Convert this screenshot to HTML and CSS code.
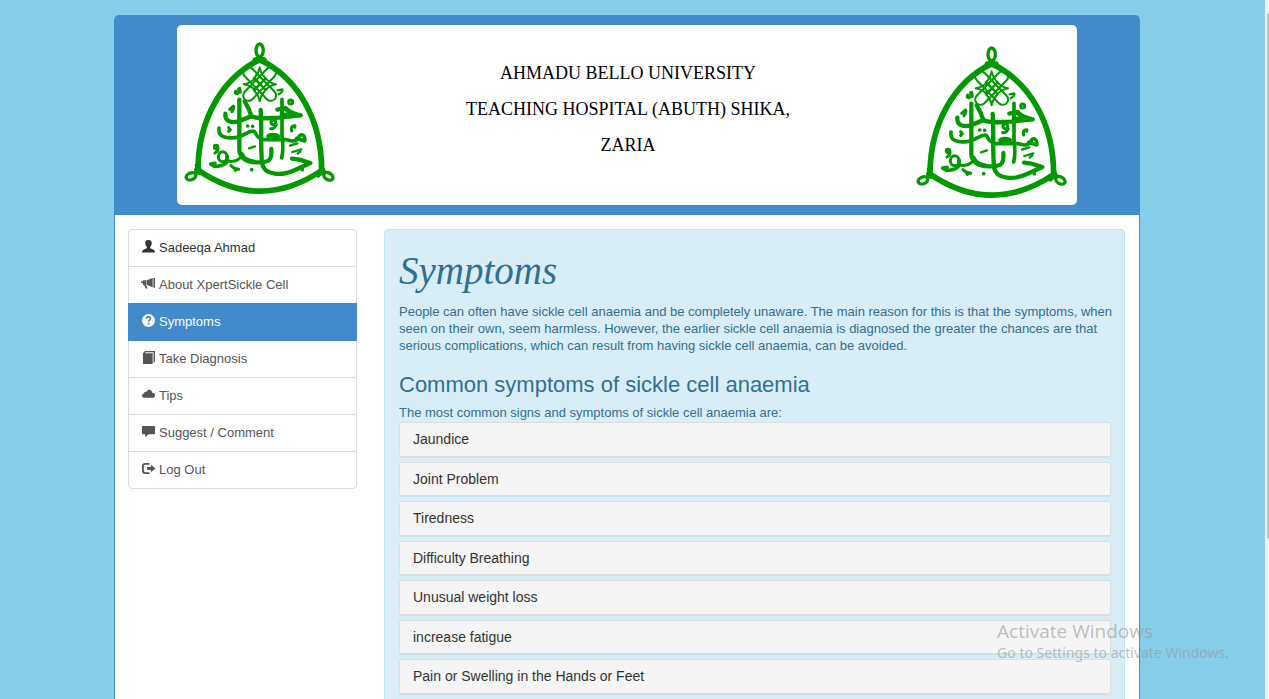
FILE: index.html
```
<!DOCTYPE html>
<html lang="en">
<head>
<meta charset="utf-8">
<title>XpertSickle Cell - Symptoms</title>
<link rel="stylesheet" href="styles.css">
</head>
<body>
<svg class="sprite" aria-hidden="true">
  <symbol id="crest" viewBox="24 30 465 465">
    <g fill="none" stroke="#090" stroke-linecap="round" stroke-linejoin="round">
      <g stroke-width="17">
        <path d="M254 89C140 145 70 270 69 418"/>
        <path d="M254 89C370 145 440 270 440 422"/>
        <path d="M66 418Q254 548 442 420"/>
      </g>
      <g stroke-width="10">
        <ellipse cx="254" cy="61" rx="11" ry="19"/>
        <ellipse cx="48" cy="439" rx="15" ry="10" transform="rotate(-22 48 439)"/>
        <ellipse cx="460" cy="439" rx="15" ry="10" transform="rotate(30 460 439)"/>
        <path d="M238 88L254 82L270 88M236 95L272 95M64 406L73 430L62 426M440 412L447 422L430 438"/>
      </g>
      <g stroke-width="6">
        <rect x="190" y="146" width="128" height="32" rx="16" transform="rotate(46 254 162)"/>
        <rect x="190" y="146" width="128" height="32" rx="16" transform="rotate(-46 254 162)"/>
        <path d="M254 112Q250 132 236 145L272 180Q256 197 254 214Q252 197 236 180L272 145Q258 132 254 112Z"/>
        <path d="M206 163Q226 160 240 145L272 180Q285 166 303 163Q285 160 272 145L240 180Q226 166 206 163Z"/>
      </g>
      <g stroke-width="13">
        <path d="M193 209V360C194 385 215 397 245 397C280 398 292 394 289 357"/>
        <path d="M257 240C261 290 256 340 261 400C268 438 322 438 360 420L406 399L373 389L351 386"/>
        <path stroke-width="11" d="M321 208V318C325 345 325 362 320 384"/>
        <path d="M151 251C149 278 175 280 195 272Q218 264 229 258C224 240 216 225 209 214"/>
        <path d="M228 258C250 270 280 263 312 263L377 256Q345 250 331 234L307 239"/>
        <path d="M321 236L332 236L350 252L321 256Z"/>
        <path stroke-width="11" d="M132 294C129 320 150 326 180 323C206 321 222 299 237 304C246 310 240 323 267 329H335C356 338 370 330 373 319C380 308 392 318 389 333L365 325"/>
        <path d="M200 372C206 386 220 393 236 395"/>
      </g>
      <g stroke-width="9">
        <ellipse cx="143" cy="380" rx="13" ry="15"/>
        <path stroke-width="11" d="M156 378Q161 401 141 406Q120 413 107 402L120 400"/>
        <path d="M155 391Q178 400 195 384"/>
        <circle cx="123" cy="351" r="5"/><path d="M129 354Q130 364 120 369"/>
        <path d="M164 238L175 228Q180 232 171 245"/>
        <path d="M182 183Q178 191 186 191Q193 190 191 176M194 175L196 187"/>
        <path stroke-width="7" d="M308 181L322 178Q324 185 311 193"/>
        <circle cx="347" cy="216" r="6"/>
        <circle cx="295" cy="277" r="7"/><path d="M304 283Q300 297 287 296"/>
        <path stroke-width="16" d="M282 319Q294 313 307 319"/>
        <path d="M161 293L166 299L161 304M350 303Q346 286 360 287L359 292"/>
        <path stroke-width="7" d="M345 347L367 340M352 366L379 358M368 371L376 365M222 355L240 349"/>
        <path d="M168 407L178 415L191 418M178 415L181 421"/>
        <path d="M218 288h.1M233 289h.1M230 419h.1M382 419h.1" stroke-width="11"/>
      </g>
    </g>
  </symbol>
</svg>

<div class="page">
  <header class="masthead">
    <div class="banner">
      <svg class="crest" role="img" aria-label="University crest"><use href="#crest"/></svg>
      <div class="banner-title">
        <div>AHMADU BELLO UNIVERSITY</div>
        <div>TEACHING HOSPITAL (ABUTH) SHIKA,</div>
        <div>ZARIA</div>
      </div>
      <svg class="crest crest-right" role="img" aria-label="University crest"><use href="#crest"/></svg>
    </div>
  </header>

  <div class="columns">
    <nav class="menu" aria-label="Main">
      <a class="menu-item user" href="#user"><svg class="icon" viewBox="0 0 14 14"><path d="M7 0C4.400 0 3.300 1.500 3.500 3.500C3.600 5.500 4.500 6.600 5.200 7.500V9L1.500 10.500Q0 11.200 0 13.500H14Q14 11.200 12.500 10.500L8.800 9V7.500C9.500 6.600 10.400 5.500 10.500 3.500C10.700 1.500 9.600 0 7 0Z"/></svg>Sadeeqa Ahmad</a>
      <a class="menu-item" href="#about"><svg class="icon" viewBox="0 0 14 14"><path d="M-1 4.500H1V3.500H4.500V8.500L6 12.500H4L2.300 8.500H1V6.500H-1ZM5 3.600L11.500 1V11L5 8.400ZM12.300 1H14V11.500H12.300Z"/></svg>About XpertSickle Cell</a>
      <a class="menu-item active" href="#symptoms" aria-current="page"><svg class="icon" viewBox="0 0 14 14"><circle cx="7" cy="7" r="7"/><path d="M4.700 5.200C4.900 2.200 9.300 2.500 9.200 5C9.100 6.700 7.200 6.600 7.100 8.400" fill="none" stroke="#428bca" stroke-width="1.800"/><path d="M6.200 9.400H8V11.200H6.200Z" fill="#428bca"/></svg>Symptoms</a>
      <a class="menu-item" href="#diagnosis"><svg class="icon" viewBox="0 0 14 14"><path d="M1 2.500L3.300 0H14V11.500L12.500 13V1.300H4L3 2.500H11.500V14H2Q1 14 1 13Z"/></svg>Take Diagnosis</a>
      <a class="menu-item" href="#tips"><svg class="icon" viewBox="0 0 14 14"><path d="M3 10.500C-.8 10.500-.8 6 2.300 5.800C2.500 4 4 3.800 4.700 4.300C5.800 .6 11 1.400 10.900 5C15 4.900 15 10.500 11.500 10.500Z"/></svg>Tips</a>
      <a class="menu-item" href="#comment"><svg class="icon" viewBox="0 0 14 14"><path d="M1 1H13Q14 1 14 2V9Q14 10 13 10H7L3.500 13.300V10H1Q0 10 0 9V2Q0 1 1 1Z"/></svg>Suggest / Comment</a>
      <a class="menu-item" href="#logout"><svg class="icon" viewBox="0 0 14 14"><path d="M8 2H3.500Q1 2 1 4.500V9.500Q1 12 3.500 12H8" fill="none" stroke="currentColor" stroke-width="2"/><path d="M5.500 5.500H9.500V3L14.500 7L9.500 11V8.500H5.500Z"/></svg>Log Out</a>
    </nav>

    <main class="well">
      <h1 class="title">Symptoms</h1>
      <p class="text">People can often have sickle cell anaemia and be completely unaware. The main reason for this is that the symptoms, when<br>seen on their own, seem harmless. However, the earlier sickle cell anaemia is diagnosed the greater the chances are that<br>serious complications, which can result from having sickle cell anaemia, can be avoided.</p>
      <h2 class="subtitle">Common symptoms of sickle cell anaemia</h2>
      <p class="text">The most common signs and symptoms of sickle cell anaemia are:</p>
      <div class="panels">
        <a class="panel" href="#jaundice">Jaundice</a>
        <a class="panel" href="#joint">Joint Problem</a>
        <a class="panel" href="#tiredness">Tiredness</a>
        <a class="panel" href="#breathing">Difficulty Breathing</a>
        <a class="panel" href="#weight">Unusual weight loss</a>
        <a class="panel" href="#fatigue">increase fatigue</a>
        <a class="panel" href="#pain">Pain or Swelling in the Hands or Feet</a>
      </div>
    </main>
  </div>
</div>

<div class="watermark">
  <div class="watermark-title">Activate Windows</div>
  <div>Go to Settings to activate Windows.</div>
</div>
<div class="scrollbar"><div class="scroll-thumb"></div></div>
</body>
</html>
```
FILE: styles.css
```
* { box-sizing: border-box; }

html, body { height: 100%; }

body {
  margin: 0;
  padding: 15px 129px 0 114px;
  overflow: hidden;
  background: #87ceeb;
  font-family: "Liberation Sans", Arial, sans-serif;
  font-size: 13px;
  line-height: 17px;
}

a { text-decoration: none; }

.sprite { position: absolute; width: 0; height: 0; }

.page {
  background: #fff;
  border: 1px solid #428bca;
  border-top: 0;
  border-radius: 5px 5px 0 0;
}

.masthead {
  padding: 10px 62px;
  background: #428bca;
  border-radius: 4px 4px 0 0;
}

.banner {
  display: flex;
  justify-content: space-between;
  align-items: flex-start;
  min-height: 180px;
  padding: 15px 7px 0 6px;
  background: #fff;
  border-radius: 5px;
}

.crest { width: 155px; height: 155px; }
.crest-right { margin-top: 4px; }

.banner-title {
  padding: 15px 0 0 3px;
  color: #000;
  font-family: "Liberation Serif", "Times New Roman", serif;
  font-size: 18px;
  line-height: 36px;
  text-align: center;
}

.columns {
  display: grid;
  grid-template-columns: minmax(0, 229fr) minmax(0, 741fr);
  gap: 27px;
  align-items: start;
  padding: 14px 14px 20px 13px;
}

.menu {
  border: 1px solid #ddd;
  border-radius: 4px;
}

.menu-item {
  display: flex;
  align-items: center;
  gap: 4px;
  padding: 9px 13px 10px;
  border-top: 1px solid #ddd;
  color: #555;
}

.menu-item:first-child { border-top: 0; }
.menu-item.user { color: #333; }

.menu-item.active {
  margin: 0 -1px -1px;
  padding: 9px 14px 11px;
  position: relative;
  background: #428bca;
  border-color: #428bca;
  color: #fff;
}

.icon {
  width: 13px;
  height: 13px;
  margin-bottom: 2px;
  overflow: visible;
  fill: currentColor;
}

.well {
  padding: 19px 13px 14px 14px;
  background: #d9edf7;
  border: 1px solid #bce8f1;
  border-radius: 4px;
  color: #31708f;
}

.title {
  margin: 0 0 10px;
  font-family: "Monotype Corsiva", "Liberation Serif", serif;
  font-size: 39px;
  font-style: italic;
  font-weight: 400;
  line-height: 44px;
}

.text {
  margin: 0;
  white-space: nowrap;
}

.subtitle {
  margin: 19px 0 7px;
  font-size: 22px;
  font-weight: 400;
  line-height: 24px;
}

.panels {
  display: grid;
  gap: 5px;
  margin-top: 1px;
}

.panel {
  padding: 8px 13px 7px;
  background: #f5f5f5;
  border: 1px solid #ddd;
  border-radius: 2px;
  box-shadow: 0 1px 1px rgba(0, 0, 0, .05);
  color: #333;
  font-size: 14px;
  line-height: 1.25;
}

.watermark {
  position: absolute;
  right: 40px;
  bottom: 35px;
  color: rgba(150, 150, 150, .6);
  font-family: "Noto Sans", "Open Sans", sans-serif;
  font-size: 14px;
  line-height: 22px;
}

.watermark-title {
  font-family: "Open Sans", "Noto Sans", sans-serif;
  font-size: 19px;
}

.scrollbar {
  position: absolute;
  top: 0;
  right: 0;
  bottom: 0;
  width: 4px;
  padding: 14px 0 0 2px;
  background: #f1f1f1;
}

.scroll-thumb { height: 524px; background: #c1c1c1; }
```
